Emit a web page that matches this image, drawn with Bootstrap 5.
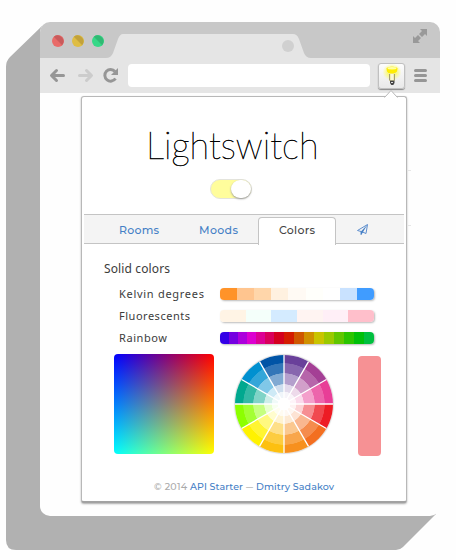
<!DOCTYPE html>
<html lang="en">
<head>
<meta charset="utf-8">
<meta name="viewport" content="width=device-width, initial-scale=1">
<title>Lightswitch</title>
<link href="https://cdn.jsdelivr.net/npm/bootstrap@5.3.0/dist/css/bootstrap.min.css" rel="stylesheet">
<style>
body{width:456px;height:560px;overflow:hidden;background:#fefefe;font-family:"Open Sans","Noto Sans",sans-serif}
.stage{width:456px;height:560px;padding:22px 16px 44px 40px}
.block-side{left:0;top:0;z-index:0}
.browser{width:400px;height:494px;border-radius:10px;z-index:1;background:#fefefe}
.titlebar{height:36px;background:#c8c8c8}
.toolbar{height:35px;background:#e5e5e5;padding:6px 10px 0 9px}
.address{width:242px;height:23px;border-radius:4px;margin-left:9px}
.ext-btn{width:27px;height:26px;margin:-1px 0 0 8px;border:1px solid #c0c0c0;border-radius:3px;background:linear-gradient(#fdfdfd,#e9e9e9);box-shadow:0 1px 1px #888}
.menu-icon{margin-left:7px}
.popup-box{width:326px;height:407px;margin:3px 0 0 41px;border:1px solid #b8b8b8;border-bottom:2px solid #a2a2a2;border-radius:3px;box-shadow:0 1px 2px #aaa;padding:0 2px}
.pointer{left:302px;top:-8px}
.edge-ticks{left:326px;top:72px}
.logo-title{height:82px;padding-top:18px}
.logo-title text{font-family:Lato,"Open Sans",sans-serif;font-weight:200;stroke:#000;stroke-width:.55px}
.switch{width:42px;height:20px;margin-left:126px;border-radius:10px;background:#fffd9c;border:1px solid #e4e4dc}
.knob{width:20px;height:18px;border-radius:10px;box-shadow:0 1px 2px #999}
.tabs{height:30px;margin-top:15px;background:#f4f4f4;border-top:1px solid #c4c4c4;border-bottom:1px solid #c4c4c4}
.tabs svg text,.foot text{font-family:Montserrat,Inter,sans-serif}
.tab-on{width:78px;height:28px;margin:2px 0 -1px;border:1px solid #c4c4c4;border-bottom:0;border-radius:4px 4px 0 0;background:#fff}
.lbl text{font-family:"Noto Sans","Open Sans",sans-serif;fill:#3c3c3c}
.strip{width:154px;height:12px;border-radius:4px;box-shadow:1px 1px 2px #bbb}
.strip i{flex:1}
.rainbow i{flex:0 0 9px}
.rainbow i:nth-child(n+7){flex-basis:10px}
.rows{padding:0 0 0 35px}
.rows>div{height:22px}
.pickers{padding:5px 0 0 30px}
.pick{width:100px;height:100px;border-radius:4px;background:linear-gradient(to right,#00f,#f00),linear-gradient(#000,#0f0);background-blend-mode:screen}
.wheel{width:98px;height:98px;border-radius:50%;margin-left:21px;margin-top:1px;box-shadow:0 0 1px 1px #ddd;background:radial-gradient(circle,#fff 6px,#fffffff0 6.5px 12px,#ffffffce 12.5px 19.5px,#ffffff80 20px 30.5px,#ffffff33 31px 40.5px,#fff0 41px),
conic-gradient(#69409a 30deg,#a43f95 0 60deg,#e83e97 0 90deg,#ed1c24 0 120deg,#f36f21 0 150deg,#f7901e 0 180deg,#fdc010 0 210deg,#fff200 0 240deg,#8cff00 0 270deg,#00a88f 0 300deg,#0090d0 0 330deg,#0054a6 0)}
.swatch{width:23px;height:100px;border-radius:4px;margin:2px 0 0 25px;background:#f69194}
svg{display:block;flex:none}
</style>
</head>
<body>
<main class="stage position-relative">
<svg class="block-side position-absolute" width="456" height="560"><path d="M42 26L10 57Q6 61 6 67V540Q6 550 16 550H396Q400 550 403 547L436 514L400 480H60V26Z" fill="#b1b1b1"/></svg>
<section class="browser position-relative overflow-hidden">
<header class="titlebar">
<svg width="400" height="36"><path d="M66 36Q71 36 73 31L78 17Q80 12 83 12H253Q257 12 259 17L264 31Q266 36 271 36Z" fill="#e5e5e5"/>
<circle cx="18" cy="19" r="6" fill="#e96b69"/><path d="M13.800 14.800a6 6 0 0 1 8.400 8.400z" fill="#c95b5c"/>
<circle cx="38" cy="19" r="6" fill="#dfbd44"/><path d="M33.800 14.800a6 6 0 0 1 8.400 8.400z" fill="#c2a23b"/>
<circle cx="58" cy="19" r="6" fill="#36d887"/><path d="M53.800 14.800a6 6 0 0 1 8.400 8.400z" fill="#30b973"/>
<circle cx="248" cy="24" r="6" fill="#d0d0d0"/>
<g fill="#999"><path d="M380 7h7v7l-2-2-3 3-3-3 3-3zM373 14l2 2 3-3 3 3-3 3 2 2h-7z"/></g></svg>
</header>
<nav class="toolbar d-flex align-items-start">
<svg width="70" height="23" fill="none" stroke-width="3" stroke-linecap="round" stroke-linejoin="round"><g stroke="#969696"><path d="M14.500 11.500H3M7.500 6.500l-5 5 5 5"/></g><g stroke="#ccc"><path d="M30.500 11.500H42M37.500 6.500l5 5-5 5"/></g><path d="M66.500 14.500A5.800 5.800 0 1 1 66 7.500" stroke="#969696" stroke-linecap="butt"/><path d="M69 4v7h-7z" fill="#969696"/></svg>
<div class="address bg-white"></div>
<div class="ext-btn d-flex justify-content-center"><svg width="24" height="24"><defs><radialGradient id="glow"><stop offset=".3" stop-color="#ff0"/><stop offset="1" stop-color="#ff0" stop-opacity="0"/></radialGradient></defs><ellipse cx="12" cy="8" rx="9.500" ry="8.500" fill="url(#glow)" opacity=".65"/><path d="M6.500 4Q12 1 17.500 4Q18.500 7.500 15 10V17H9V10Q5.500 7.500 6.500 4Z" fill="#f2edae"/><path d="M6.500 4Q12 1.500 17.500 4L17 7.500Q15 10 12 9.500Q8 10 7 7.500Z" fill="#ffed00"/><ellipse cx="12" cy="4.200" rx="4.500" ry="1.200" fill="#ffffa0"/><path d="M9.500 10v6.500M14.500 10v6.500" stroke="#8d8967" stroke-width=".8"/><path d="M12 10v6" stroke="#fff"/><path d="M10 16.500h4.500v2.500l-1.200 2h-2l-1.300-2z" fill="#444"/><path d="M11 18.500h2" stroke="#ddd"/></svg></div>
<svg class="menu-icon" width="16" height="23"><path d="M3.500 6.500h10M3.500 11.500h10M3.500 16.500h10" stroke="#969696" stroke-width="3" stroke-linecap="round"/></svg>
</nav>
<article class="popup-box position-relative bg-white">
<svg class="pointer position-absolute" width="14" height="9"><path d="M1 9V8L7 1.500L13 8V9Z" fill="#fff"/><path d="M0 8h1l6-6.500L13 8h1" fill="none" stroke="#b8b8b8"/></svg>
<svg class="edge-ticks position-absolute" width="3" height="60"><path d="M0 1.500h3M0 56.500h3" stroke="#e6e6e6"/></svg>
<h1 class="logo-title m-0"><svg width="320" height="60"><text x="62" y="43.500" font-size="38.500" fill="#000" textLength="172.500" lengthAdjust="spacingAndGlyphs">Lightswitch</text></svg></h1>
<div class="switch d-flex justify-content-end"><span class="knob bg-white"></span></div>
<nav class="tabs d-flex">
<svg width="174" height="28"><g font-size="11" font-weight="500" fill="#4580c6"><text x="35" y="19" textLength="40">Rooms</text><text x="115" y="19" textLength="39">Moods</text></g></svg>
<div class="tab-on"><svg width="76" height="26"><text x="20" y="16" font-size="11" font-weight="500" fill="#444" textLength="36">Colors</text></svg></div>
<svg width="60" height="28"><path d="M21.500 15.500L31.500 9.500L30 18.500L26.500 17L25 19.500V16.500Z" fill="none" stroke="#5f8fcf" stroke-linejoin="round"/><path d="M25 20V16.500L31.500 9.500L27 17Z" fill="#4580c6"/></svg>
</nav>
<svg class="lbl" width="300" height="39"><text x="20" y="29" font-size="12" textLength="66">Solid colors</text></svg>
<div class="rows">
<div class="d-flex align-items-center"><svg class="lbl" width="101" height="22"><text x="0" y="15" font-size="11" textLength="85">Kelvin degrees</text></svg><div class="strip d-flex overflow-hidden" data-colors="#ff9329 #ffc58f #ffd6aa #fff1e0 #fffaf4 #fffffb #ffffff #c9e2ff #409cff"></div></div>
<div class="d-flex align-items-center"><svg class="lbl" width="101" height="22"><text x="0" y="15" font-size="11" textLength="71">Fluorescents</text></svg><div class="strip d-flex overflow-hidden" data-colors="#fff4e5 #f4fffa #d4ebff #fff4f2 #ffeff7 #ffbfcb"></div></div>
<div class="d-flex align-items-center"><svg class="lbl" width="101" height="22"><text x="0" y="15" font-size="11" textLength="48">Rainbow</text></svg><div class="strip rainbow d-flex overflow-hidden" data-colors="#3300e6 #7500e0 #ac00dc #dc00d0 #dc0094 #d9005b #d4001e #d41c00 #cf5700 #cf9000 #c9c400 #9ac900 #61c600 #2bc400 #00bf09 #00bf3f"></div></div>
</div>
<div class="pickers d-flex">
<div class="pick"></div>
<div class="wheel"><svg width="98" height="98" stroke="#fff" stroke-width="1.300"><path d="M49 0V98M0 49H98M24.500 6.600L73.500 91.400M73.500 6.600L24.500 91.400M6.600 24.500L91.400 73.500M91.400 24.500L6.600 73.500"/></svg></div>
<div class="swatch"></div>
</div>
<footer class="foot"><svg width="320" height="42"><g font-size="9.500" font-weight="500" fill="#4580c6"><text x="70" y="34" fill="#aaa" textLength="33">© 2014</text><text x="106" y="34" textLength="53">API Starter</text><text x="162" y="34" fill="#aaa" textLength="7" lengthAdjust="spacingAndGlyphs">–</text><text x="172" y="34" textLength="78">Dmitry Sadakov</text></g></svg></footer>
</article>
</section>
</main>
<script src="https://cdn.jsdelivr.net/npm/bootstrap@5.3.0/dist/js/bootstrap.bundle.min.js"></script>
<script>
document.querySelectorAll('.strip').forEach(function(s){
  s.dataset.colors.split(' ').forEach(function(c){
    var i=document.createElement('i');i.style.background=c;s.appendChild(i);
  });
});
</script>
</body>
</html>
